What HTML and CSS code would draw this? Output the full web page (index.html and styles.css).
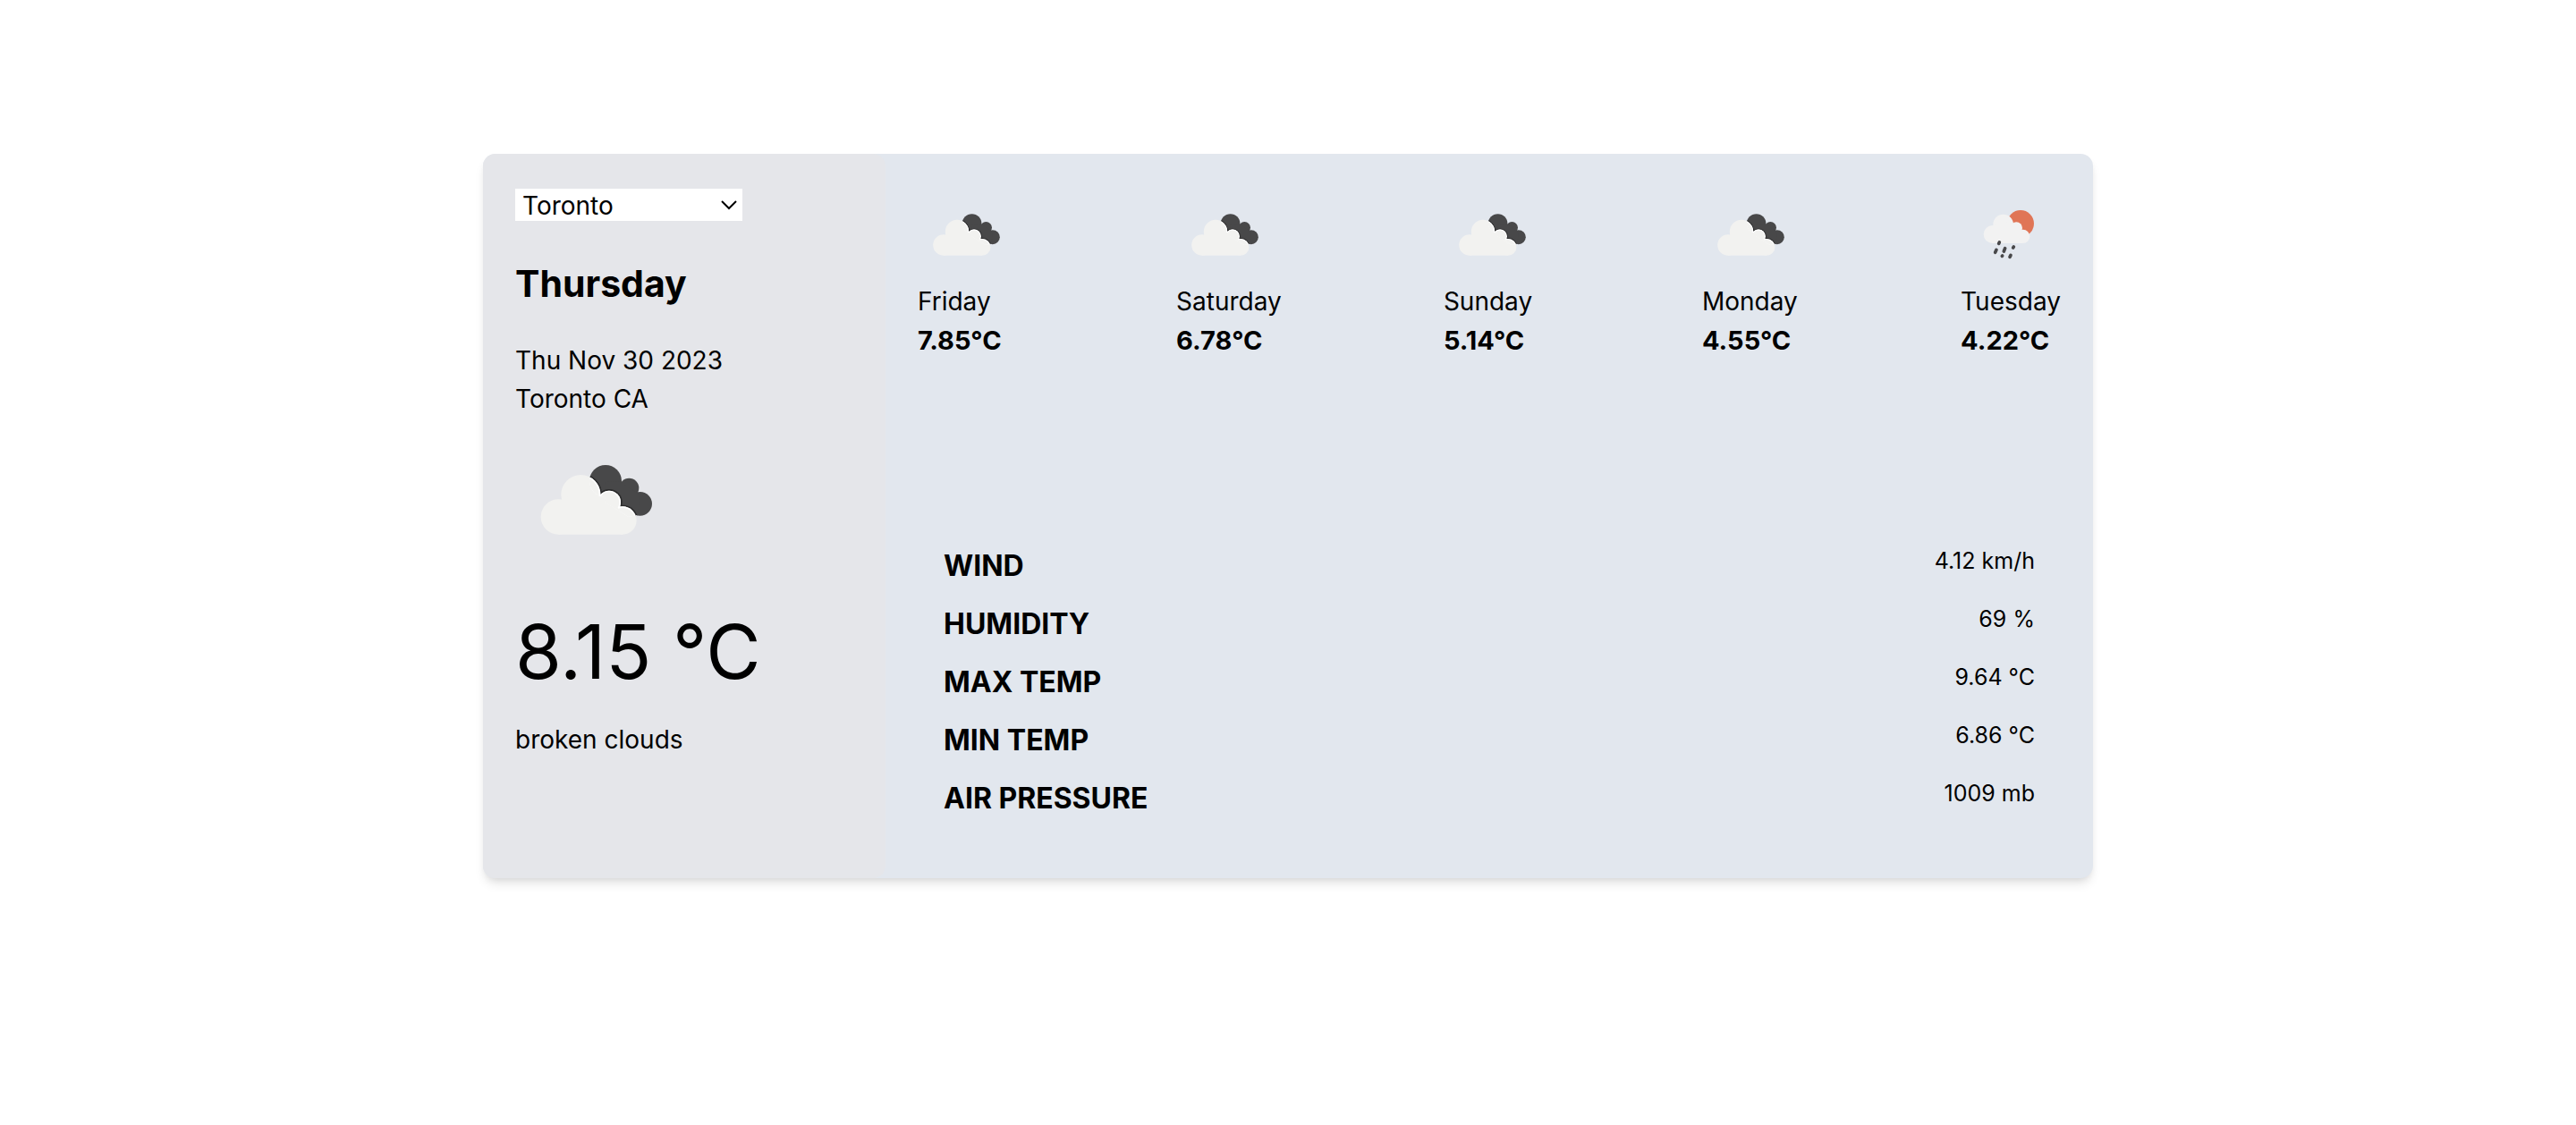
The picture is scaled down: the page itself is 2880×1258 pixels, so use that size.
FILE: index.html
```html
<!DOCTYPE html>
<html lang="en">
<head>
<meta charset="utf-8">
<meta name="viewport" content="width=device-width, initial-scale=1">
<title>Weather forecast</title>
<link rel="stylesheet" href="styles.css">
</head>
<body>
<svg class="sprite" aria-hidden="true">
  <clipPath id="back-cloud">
    <circle cx="303" cy="210" r="54"/><circle cx="382" cy="233" r="33"/><circle cx="419" cy="286" r="40"/>
    <path d="M303 210 357 212 382 233 412 250 419 286 405 325 380 330 300 280Z"/>
  </clipPath>
  <symbol id="broken-clouds" viewBox="0 0 540 540">
    <g fill="#484849">
      <circle cx="303" cy="210" r="54"/><circle cx="382" cy="233" r="33"/><circle cx="419" cy="286" r="40"/>
      <path d="M303 210 357 212 382 233 412 250 419 286 405 325 380 330 300 280Z"/>
    </g>
    <g clip-path="url(#back-cloud)" fill="#2a2a2b">
      <circle cx="220" cy="255" r="71"/><circle cx="315" cy="281" r="44"/><circle cx="360" cy="342" r="52"/>
    </g>
    <g fill="#f2f2f0">
      <circle cx="145" cy="330" r="59"/><circle cx="220" cy="255" r="66"/><circle cx="315" cy="281" r="39"/><circle cx="360" cy="342" r="47"/>
      <path d="M145 389V280L220 240 300 265 360 300V389Z"/>
    </g>
    <g clip-path="url(#back-cloud)">
      <g fill="#fff"><circle cx="220" cy="255" r="66"/><circle cx="315" cy="281" r="39"/><circle cx="360" cy="342" r="47"/></g>
      <g fill="#f2f2f0"><circle cx="220" cy="255" r="61"/><circle cx="315" cy="281" r="34"/><circle cx="360" cy="342" r="42"/><path d="M220 255 290 263 345 300 360 342H220Z"/></g>
    </g>
  </symbol>
  <symbol id="sun-rain" viewBox="0 0 324 324">
    <circle cx="201" cy="126" r="45" fill="#e07556"/>
    <g fill="#f2f2f2">
      <circle cx="107" cy="162" r="30"/><circle cx="143" cy="129" r="34"/><circle cx="187" cy="141" r="20"/><circle cx="209" cy="169" r="23"/>
      <path d="M107 192V136L143 115 187 135 209 150V192Z"/>
    </g>
    <g stroke="#48484a" stroke-width="11" stroke-linecap="round">
      <path d="M130 189l-2 4M120 214l-4 9M149 209l-4 10M178 204l-2 3M140 234l-1 1M168 232l-3 6"/>
    </g>
  </symbol>
</svg>

<main class="card">
  <section class="today">
    <select class="city" aria-label="City">
      <option>Toronto</option>
      <option>Montreal</option>
      <option>Vancouver</option>
    </select>
    <h1 class="weekday">Thursday</h1>
    <p>Thu Nov 30 2023</p>
    <p>Toronto CA</p>
    <svg class="today-icon" role="img" aria-label="broken clouds"><use href="#broken-clouds"/></svg>
    <p class="temperature">8.15 °C</p>
    <p>broken clouds</p>
  </section>

  <section class="details">
    <ul class="forecast">
      <li><svg class="day-icon" aria-hidden="true"><use href="#broken-clouds"/></svg><span>Friday</span><strong>7.85°C</strong></li>
      <li><svg class="day-icon" aria-hidden="true"><use href="#broken-clouds"/></svg><span>Saturday</span><strong>6.78°C</strong></li>
      <li><svg class="day-icon" aria-hidden="true"><use href="#broken-clouds"/></svg><span>Sunday</span><strong>5.14°C</strong></li>
      <li><svg class="day-icon" aria-hidden="true"><use href="#broken-clouds"/></svg><span>Monday</span><strong>4.55°C</strong></li>
      <li><svg class="day-icon" aria-hidden="true"><use href="#sun-rain"/></svg><span>Tuesday</span><strong>4.22°C</strong></li>
    </ul>
    <table class="stats">
      <tbody>
        <tr><th scope="row">WIND</th><td>4.12 km/h</td></tr>
        <tr><th scope="row">HUMIDITY</th><td>69 %</td></tr>
        <tr><th scope="row">MAX TEMP</th><td>9.64 °C</td></tr>
        <tr><th scope="row">MIN TEMP</th><td>6.86 °C</td></tr>
        <tr><th scope="row">AIR PRESSURE</th><td>1009 mb</td></tr>
      </tbody>
    </table>
  </section>
</main>
</body>
</html>
```
FILE: styles.css
```css
* {
  box-sizing: border-box;
  margin: 0;
  padding: 0;
}

body {
  padding: 172px 36px;
  background: #fff;
  color: #000;
  font: 28px/43px Inter, "Liberation Sans", sans-serif;
}

.sprite {
  position: absolute;
  width: 0;
  height: 0;
}

.card {
  display: grid;
  grid-template-columns: 1fr 3fr;
  width: 64.1%;
  max-width: 1800px;
  min-height: 810px;
  margin: 0 auto;
  border-radius: 14px;
  background: #e2e7ee;
  box-shadow: 0 8px 12px -2px rgba(0, 0, 0, 0.1), 0 4px 8px -4px rgba(0, 0, 0, 0.1);
}

.today {
  padding: 39px 36px 36px;
  border-radius: 14px;
  background: #e5e6ea;
}

.city {
  display: block;
  width: 254px;
  height: 36px;
  padding: 1px 8px 0;
  border: 0;
  border-radius: 0;
  appearance: none;
  background: #fff url("data:image/svg+xml,%3Csvg xmlns='http://www.w3.org/2000/svg' width='18' height='11'%3E%3Cpath d='M1 1l8 8 8-8' fill='none' stroke='black' stroke-width='2'/%3E%3C/svg%3E") no-repeat right 6px center;
  color: inherit;
  font: inherit;
  line-height: 36px;
}

.weekday {
  margin: 37px 0 32px;
  font-size: 41px;
  line-height: 66px;
  font-weight: 700;
}

.today-icon {
  display: block;
  width: 180px;
  height: 180px;
}

.temperature {
  margin: 16px 0 12px;
  font-size: 84px;
  line-height: 130px;
}

.details {
  display: flex;
  flex-direction: column;
  justify-content: space-between;
  padding: 36px;
}

.forecast {
  display: flex;
  justify-content: space-between;
  list-style: none;
}

.forecast li {
  display: flex;
  flex-direction: column;
}

.forecast strong {
  font-size: 29px;
}

.day-icon {
  width: 108px;
  height: 108px;
}

.stats {
  width: 100%;
  margin-bottom: 21px;
  border-collapse: collapse;
}

.stats th,
.stats td {
  padding: 8px 29px;
  vertical-align: top;
}

.stats th {
  font-size: 32px;
  line-height: 49px;
  font-weight: 700;
  text-align: left;
}

.stats td {
  font-size: 25px;
  line-height: 38px;
  text-align: right;
}
```
